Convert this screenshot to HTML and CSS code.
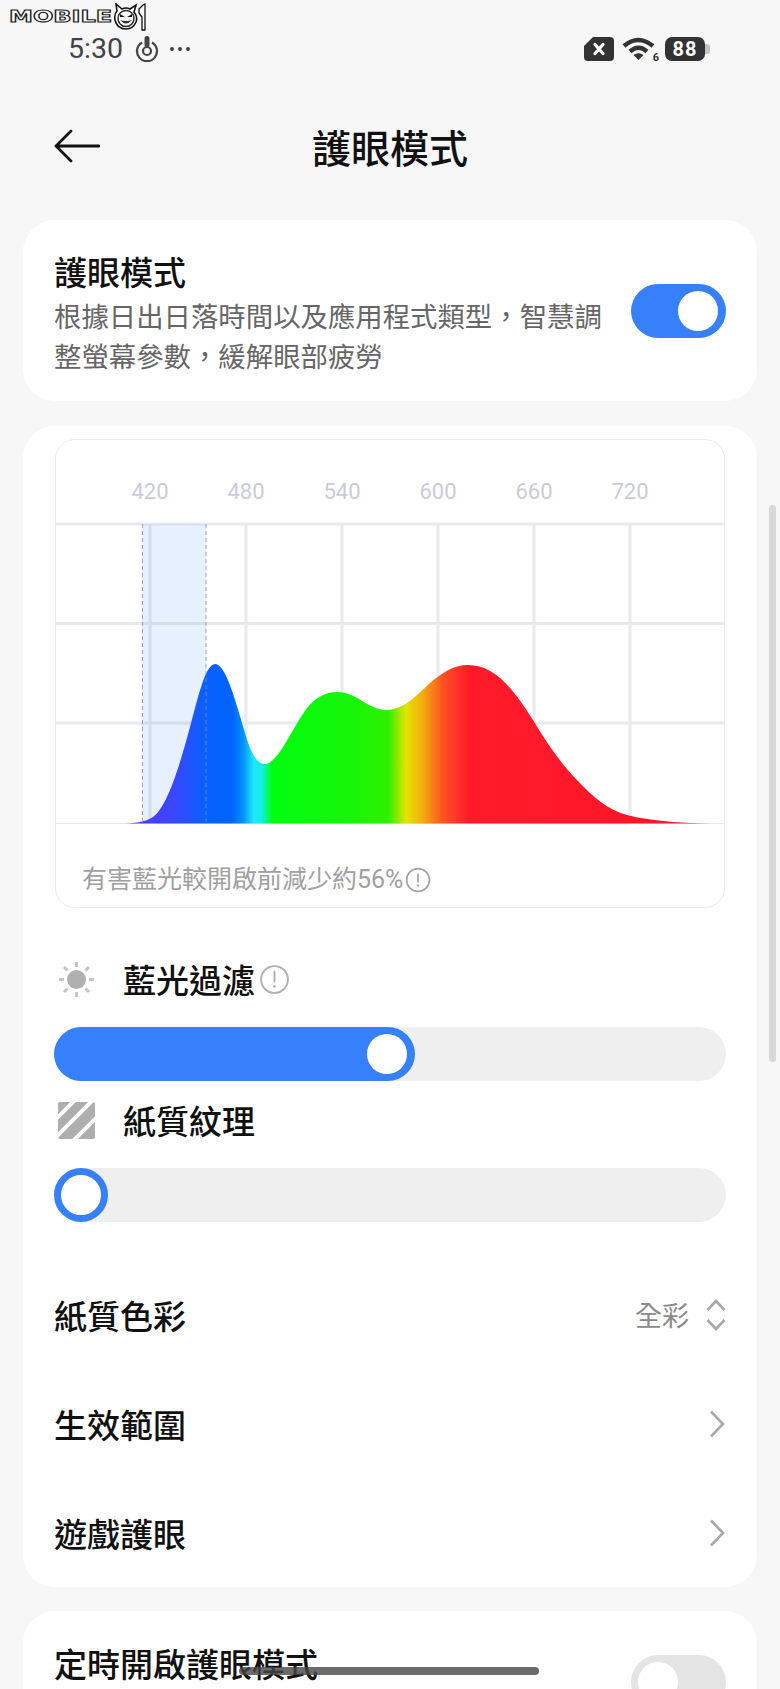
FILE: index.html
```html
<!DOCTYPE html>
<html lang="zh-Hant">
<head>
    <meta charset="UTF-8">
    <meta name="viewport" content="width=device-width, initial-scale=1.0">
    <title>護眼模式</title>
    <link rel="stylesheet" href="styles.css">
</head>
<body>
    <div class="watermark">
        <span class="wm-text">MOBILE</span>
        <svg class="wm-face" width="34" height="28" viewBox="0 0 34 28">
            <path d="M3 1 L9 6 Q13 4 17 6 L23 2 L21 9 Q25 14 23 19 Q20 26 13 26 Q4 26 2 17 Q1 11 4 8 Z" fill="#fff" stroke="#111" stroke-width="1.6"/>
            <circle cx="13" cy="15.5" r="8" fill="none" stroke="#222" stroke-width="1.4"/>
            <path d="M7 11 L12 14 L7 14 Z M19 11 L14 14 L19 14 Z" fill="#111"/>
            <path d="M7 17 Q13 24 19 17 Q13 19 7 17 Z" fill="#333"/>
            <path d="M26 6 L30 2 L32 1 L32 27 L29 27 L29 14 L26 10 Z" fill="#fff" stroke="#111" stroke-width="1.3"/>
        </svg>
    </div>

    <div class="status">
        <div class="status-left">
            <span class="clock">5:30</span>
            <svg class="ring-icon" width="24" height="26" viewBox="0 0 24 26">
                <path d="M7 6.5 A10 10 0 1 0 17 6.5" fill="none" stroke="#444" stroke-width="2.2"/>
                <circle cx="12" cy="15" r="4" fill="none" stroke="#444" stroke-width="2.2"/>
                <rect x="9.5" y="0" width="5" height="11" rx="2.5" fill="#444"/>
            </svg>
            <span class="dots"><i></i><i></i><i></i></span>
        </div>
        <div class="status-right">
            <svg width="30" height="24" viewBox="0 0 30 24">
                <path d="M9 0 H26 Q30 0 30 4 V20 Q30 24 26 24 H4 Q0 24 0 20 V9 Z" fill="#333"/>
                <path d="M11 7.5 L19 16.5 M19 7.5 L11 16.5" stroke="#fff" stroke-width="3.2" stroke-linecap="round"/>
            </svg>
            <div class="wifi">
                <svg width="34" height="24" viewBox="0 0 34 24">
                    <path d="M2 9 Q16 -3 31 9" fill="none" stroke="#333" stroke-width="4.5"/>
                    <path d="M8 14.5 Q16.5 7 25 14.5" fill="none" stroke="#333" stroke-width="4.5"/>
                    <path d="M11.5 18 Q16.5 14.5 21.5 18 L16.5 23 Z" fill="#333"/>
                </svg>
                <span class="wifi-gen">6</span>
            </div>
            <div class="battery"><span class="battery-level">88</span><span class="battery-nub"></span></div>
        </div>
    </div>

    <header class="topbar">
        <svg class="back" width="46" height="34" viewBox="0 0 46 34">
            <path d="M45 17 H2 M17 2 L2 17 L17 32" fill="none" stroke="#111" stroke-width="2.8" stroke-linecap="round" stroke-linejoin="round"/>
        </svg>
        <h1>護眼模式</h1>
    </header>

    <section class="card intro">
        <div class="intro-text">
            <h2>護眼模式</h2>
            <p>根據日出日落時間以及應用程式類型，智慧調整螢幕參數，緩解眼部疲勞</p>
        </div>
        <span class="switch on"></span>
    </section>

    <section class="card main">
        <div class="chart">
            <div class="ticks">
                <span>420</span><span>480</span><span>540</span><span>600</span><span>660</span><span>720</span>
            </div>
            <svg class="plot" width="668" height="303" viewBox="56 522 668 303">
                <defs>
                    <linearGradient id="spectrum" gradientUnits="userSpaceOnUse" x1="120" y1="0" x2="725" y2="0">
                        <stop offset="0" stop-color="#5a30f0"/>
                        <stop offset="0.038" stop-color="#4b3cff"/>
                        <stop offset="0.089" stop-color="#3a46ff"/>
                        <stop offset="0.14" stop-color="#0a60ff"/>
                        <stop offset="0.185" stop-color="#0064ff"/>
                        <stop offset="0.203" stop-color="#0090ff"/>
                        <stop offset="0.221" stop-color="#20e8ff"/>
                        <stop offset="0.235" stop-color="#10f0e0"/>
                        <stop offset="0.251" stop-color="#00ff10"/>
                        <stop offset="0.383" stop-color="#18f508"/>
                        <stop offset="0.443" stop-color="#2ef000"/>
                        <stop offset="0.473" stop-color="#e4e400"/>
                        <stop offset="0.502" stop-color="#f5a80f"/>
                        <stop offset="0.532" stop-color="#ff5522"/>
                        <stop offset="0.577" stop-color="#ff1a2a"/>
                        <stop offset="1" stop-color="#ff1528"/>
                    </linearGradient>
                </defs>
                <!-- grid -->
                <g stroke="#e9e9f0" stroke-width="3">
                    <path d="M56 524 H724 M56 623.5 H724 M56 723 H724"/>
                    <path d="M150 524 V823 M246 524 V823 M342 524 V823 M438 524 V823 M534 524 V823 M630 524 V823"/>
                </g>
                <path d="M56 823.5 H724" stroke="#e8e8f0" stroke-width="1"/>
                <!-- filtered band -->
                <rect x="142" y="524" width="64" height="299" fill="#3c82f5" fill-opacity="0.12"/>
                <!-- spectrum curve -->
                <path d="M120 823.5 C135 823.5 145 822 153 817 C166 808 178 772 190 727 C197 702 205 664 215 664 C225 664 234 695 245 733 C250 750 256 764 265 764 C278 764 292 728 307 708 C315 698 325 692 337 692 C358 692 367 710 387 710 C403 710 416 696 430 683 C442 673 453 665 468 665 C493 665 511 685 533 720 C548 745 562 765 577 780 C593 797 608 810 627 815 C655 822 690 823.5 724 823.5 Z" fill="url(#spectrum)"/>
                <path d="M142.5 524 V823 M206 524 V823" stroke="#7f93ad" stroke-opacity="0.8" stroke-width="1" stroke-dasharray="4 3"/>
            </svg>
            <p class="chart-note">有害藍光較開啟前減少約56%<svg class="info small" width="26" height="26" viewBox="0 0 24 24">
                <circle cx="12" cy="12" r="10.5" fill="none" stroke="#a4a4a4" stroke-width="1.6"/>
                <path d="M12 6.5 V13.5" stroke="#a4a4a4" stroke-width="1.6" stroke-linecap="round"/>
                <circle cx="12" cy="17" r="1.1" fill="#a4a4a4"/>
            </svg></p>
        </div>

        <div class="slider-label first">
            <svg class="slider-icon" width="37" height="37" viewBox="0 0 37 37">
                <circle cx="18.5" cy="18.5" r="9.5" fill="#b0b0b0"/>
                <path d="M18.5 1 V6 M18.5 31 V36 M1 18.5 H6 M31 18.5 H36 M6 6 L9.5 9.5 M27.5 27.5 L31 31 M31 6 L27.5 9.5 M9.5 27.5 L6 31" stroke="#c4c4c4" stroke-width="3"/>
            </svg>
            <span>藍光過濾</span>
            <svg class="info" width="31" height="31" viewBox="0 0 30 30">
                <circle cx="15" cy="15" r="13" fill="none" stroke="#b0b0b0" stroke-width="1.8"/>
                <path d="M15 7.5 V17" stroke="#b0b0b0" stroke-width="1.8" stroke-linecap="round"/>
                <circle cx="15" cy="21.5" r="1.2" fill="#b0b0b0"/>
            </svg>
        </div>
        <div class="slider">
            <div class="slider-fill half"></div>
        </div>

        <div class="slider-label second">
            <svg class="slider-icon" width="37" height="37" viewBox="0 0 37 37">
                <clipPath id="paper-corners"><rect width="37" height="37" rx="2"/></clipPath>
                <g clip-path="url(#paper-corners)">
                    <rect width="37" height="37" fill="#aeaeae"/>
                    <path d="M-3 18 L18 -3 M-3 36 L36 -3 M12 42 L42 12" stroke="#fff" stroke-width="4"/>
                </g>
            </svg>
            <span>紙質紋理</span>
        </div>
        <div class="slider">
            <div class="slider-knob"></div>
        </div>

        <div class="rows">
            <div class="row">
                <span>紙質色彩</span>
                <div class="row-value">
                    <span class="value-text">全彩</span>
                    <svg width="20" height="32" viewBox="0 0 20 32">
                        <path d="M1.5 11 L10 2 L18.5 11 M1.5 21 L10 30 L18.5 21" fill="none" stroke="#a8a8a8" stroke-width="2.6"/>
                    </svg>
                </div>
            </div>
            <div class="row">
                <span>生效範圍</span>
                <svg width="16" height="28" viewBox="0 0 16 28">
                    <path d="M2 1.5 L14 14 L2 26.5" fill="none" stroke="#a8a8a8" stroke-width="2.6"/>
                </svg>
            </div>
            <div class="row">
                <span>遊戲護眼</span>
                <svg width="16" height="28" viewBox="0 0 16 28">
                    <path d="M2 1.5 L14 14 L2 26.5" fill="none" stroke="#a8a8a8" stroke-width="2.6"/>
                </svg>
            </div>
        </div>
    </section>

    <section class="card timer">
        <h2>定時開啟護眼模式</h2>
        <span class="switch"></span>
    </section>

    <div class="scrollbar"></div>
    <div class="home-bar"></div>
</body>
</html>
```

FILE: styles.css
```css
* {
    margin: 0;
    padding: 0;
    box-sizing: border-box;
}
html, body {
    height: 1689px;
    overflow: hidden;
}
body {
    position: relative;
    background-color: #f7f7f7;
    color: #111;
    font-family: Roboto, "Noto Sans CJK TC", sans-serif;
}

/* logo over the status bar */
.watermark {
    position: absolute;
    left: 9px;
    top: 3px;
    display: flex;
    align-items: flex-start;
}
.wm-text {
    display: block;
    width: 104px;
    margin-top: 5px;
    font-family: "DejaVu Sans", sans-serif;
    font-weight: bold;
    font-size: 16px;
    line-height: 18px;
    color: #fff;
    -webkit-text-stroke: 1px #222;
    transform: scaleX(1.5);
    transform-origin: left center;
}
.wm-face {
    display: block;
}

/* status bar */
.status {
    height: 100px;
    padding: 37px 70px 0 68px;
    display: flex;
    justify-content: space-between;
    align-items: flex-start;
}
.status-left {
    display: flex;
    align-items: center;
    height: 24px;
}
.clock {
    font-size: 28.5px;
    line-height: 24px;
    color: #444;
}
.ring-icon {
    margin-left: 12px;
}
.dots {
    display: flex;
    gap: 4px;
    margin-left: 11px;
}
.dots i {
    width: 4px;
    height: 4px;
    border-radius: 50%;
    background-color: #444;
}
.status-right {
    display: flex;
    align-items: center;
    height: 24px;
}
.wifi {
    position: relative;
    width: 34px;
    height: 24px;
    margin-left: 8px;
}
.wifi-gen {
    position: absolute;
    right: -3px;
    bottom: -3px;
    font-size: 11px;
    line-height: 12px;
    font-weight: bold;
    color: #333;
}
.battery {
    display: flex;
    align-items: center;
    margin-left: 9px;
}
.battery-level {
    width: 40px;
    height: 24px;
    border-radius: 7px;
    background-color: #333;
    color: #fff;
    font-size: 20px;
    font-weight: bold;
    line-height: 24px;
    text-align: center;
    letter-spacing: 1px;
}
.battery-nub {
    width: 5px;
    height: 10px;
    border-radius: 0 3px 3px 0;
    background-color: #c4c4c4;
}

/* page header */
.topbar {
    position: relative;
    height: 100px;
    margin-bottom: 20px;
    display: flex;
    justify-content: center;
    align-items: center;
}
.topbar h1 {
    font-size: 39px;
    font-weight: 500;
    line-height: 50px;
}
.back {
    position: absolute;
    left: 54px;
    top: 29px;
}

/* cards */
.card {
    margin: 0 23px 24px;
    padding: 0 31px;
    background-color: #fff;
    border-radius: 32px;
}
.card h2 {
    font-size: 33px;
    font-weight: 500;
    line-height: 42px;
}
.intro {
    height: 181px;
    padding-top: 33px;
    display: flex;
    justify-content: space-between;
    align-items: flex-start;
    margin-bottom: 25px;
}
.intro-text {
    width: 560px;
}
.intro-text p {
    margin-top: 3px;
    font-size: 27.4px;
    line-height: 40px;
    color: #666;
}
.intro .switch {
    margin-top: 31px;
}

.switch {
    position: relative;
    flex: none;
    width: 95px;
    height: 54px;
    border-radius: 27px;
    background-color: #e4e4e4;
}
.switch::after {
    content: "";
    position: absolute;
    top: 7px;
    left: 7px;
    width: 40px;
    height: 40px;
    border-radius: 50%;
    background-color: #fff;
}
.switch.on {
    background-color: #3780fb;
}
.switch.on::after {
    left: 47px;
}

/* spectrum chart */
.main {
    height: 1161px;
    padding-top: 13px;
}
.chart {
    height: 469px;
    margin: 0 1px;
    border: 1.5px solid #ebebf0;
    border-radius: 20px;
    overflow: hidden;
}
.ticks {
    display: flex;
    height: 82px;
    padding: 37px 0 0 46px;
}
.ticks span {
    width: 96px;
    font-size: 22px;
    line-height: 30px;
    text-align: center;
    color: #c9ccd9;
}
.plot {
    display: block;
}
.chart-note {
    display: flex;
    align-items: center;
    padding: 40px 0 0 26px;
    font-size: 25px;
    line-height: 30px;
    color: #a0a0a0;
}
.info.small {
    margin-left: 2px;
}

/* sliders */
.slider-label {
    display: flex;
    align-items: center;
    height: 42px;
    padding-left: 4px;
    font-size: 33px;
    font-weight: 500;
}
.slider-label.first {
    margin-top: 50px;
}
.slider-label.second {
    margin-top: 18px;
}
.slider-icon {
    margin-right: 28px;
}
.info {
    flex: none;
    margin-left: 4px;
}
.slider {
    position: relative;
    height: 54px;
    margin-top: 27px;
    border-radius: 27px;
    background-color: #efefef;
}
.slider-fill {
    height: 54px;
    border-radius: 27px;
    background-color: #3780fb;
}
.slider-fill.half {
    width: 361px;
    position: relative;
}
.slider-fill.half::after {
    content: "";
    position: absolute;
    right: 8px;
    top: 7px;
    width: 40px;
    height: 40px;
    border-radius: 50%;
    background-color: #fff;
}
.slider-knob {
    width: 54px;
    height: 54px;
    border: 7px solid #3780fb;
    border-radius: 50%;
    background-color: #fff;
}

/* list rows */
.rows {
    margin-top: 38px;
}
.row {
    display: flex;
    justify-content: space-between;
    align-items: center;
    height: 109px;
    font-size: 33px;
    font-weight: 500;
}
.row > svg {
    margin-right: 1px;
}
.row-value {
    display: flex;
    align-items: center;
    gap: 17px;
}
.value-text {
    font-size: 27px;
    font-weight: 400;
    color: #8a8a8a;
}

/* card cut off by the bottom edge */
.timer {
    height: 181px;
    padding-top: 34px;
    display: flex;
    justify-content: space-between;
    align-items: flex-start;
}
.timer .switch {
    margin-top: 10px;
}

.scrollbar {
    position: absolute;
    left: 769px;
    top: 505px;
    width: 7px;
    height: 557px;
    border-radius: 4px;
    background-color: #d8d8d8;
}
.home-bar {
    position: absolute;
    left: 239px;
    top: 1667px;
    width: 300px;
    height: 8px;
    border-radius: 4px;
    background-color: rgba(70, 70, 70, 0.8);
}
```
